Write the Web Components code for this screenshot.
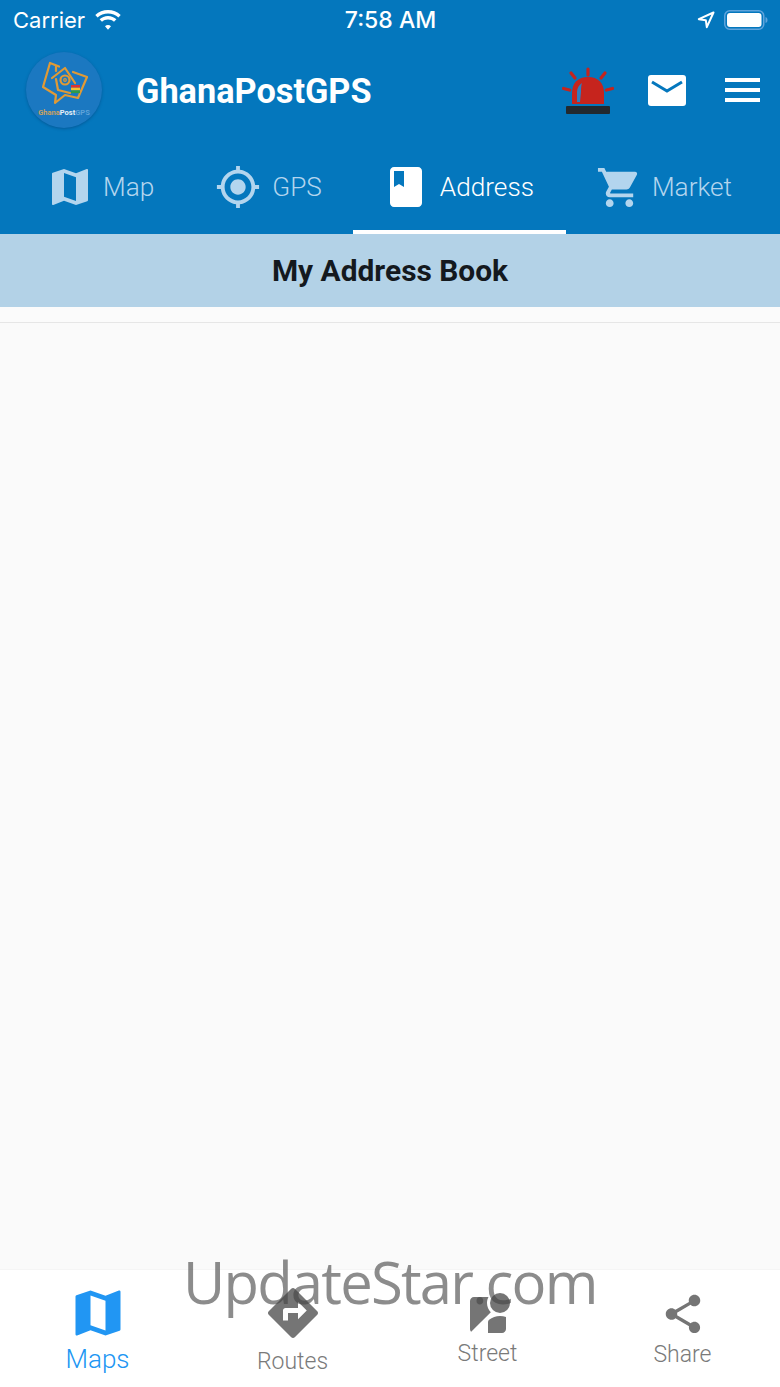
<!DOCTYPE html>
<html>
<head>
<meta charset="utf-8">
<style>
  html, body { margin: 0; padding: 0; }
  body { width: 780px; height: 1387px; overflow: hidden; background: #fafafa; font-family: Roboto, "Liberation Sans", sans-serif; position: relative; display: flex; flex-direction: column; }
  main-blank { flex: 1; }
</style>
</head>
<body>
<app-top>
  <status-bar></status-bar>
  <app-header></app-header>
  <tab-strip>
    <tab-item label="Map" icon="map" size="48" gap="12" pad-l="22" pad-r="28"></tab-item>
    <tab-item label="GPS" icon="gps" size="46" gap="14" pad-l="36" pad-r="31"></tab-item>
    <tab-item label="Address" icon="book" size="48" gap="13" pad-l="32" pad-r="32" active></tab-item>
    <tab-item label="Market" icon="cart" size="47" gap="12" pad-l="33" pad-r="30"></tab-item>
  </tab-strip>
</app-top>
<title-bar>My Address Book</title-bar>
<main-blank></main-blank>
<bottom-nav>
  <nav-item label="Maps" icon="map" size="60" top="13" fs="26" label-top="2" active></nav-item>
  <nav-item label="Routes" icon="directions" size="60" top="13" fs="23" label-top="5"></nav-item>
  <nav-item label="Street" icon="street" size="48" top="21" fs="23" label-top="1"></nav-item>
  <nav-item label="Share" icon="share" size="46" top="21" fs="23" label-top="4"></nav-item>
</bottom-nav>
<water-mark>UpdateStar.com</water-mark>

<script>
const ICONS = {
  map: '<path d="M20.5 3l-.16.03L15 5.1 9 3 3.36 4.9c-.21.07-.36.25-.36.48V20.5c0 .28.22.5.5.5l.16-.03L9 18.9l6 2.1 5.64-1.9c.21-.07.36-.25.36-.48V3.5c0-.28-.22-.5-.5-.5zM15 19l-6-2.11V5l6 2.11V19z"/>',
  gps: '<path d="M12 8c-2.21 0-4 1.79-4 4s1.79 4 4 4 4-1.79 4-4-1.79-4-4-4zm8.94 3c-.46-4.17-3.77-7.48-7.94-7.94V1h-2v2.06C6.83 3.52 3.52 6.83 3.06 11H1v2h2.06c.46 4.17 3.77 7.48 7.94 7.94V23h2v-2.06c4.17-.46 7.48-3.77 7.94-7.94H23v-2h-2.06zM12 19c-3.87 0-7-3.13-7-7s3.13-7 7-7 7 3.13 7 7-3.13 7-7 7z"/>',
  book: '<path d="M18 2H6c-1.1 0-2 .9-2 2v16c0 1.1.9 2 2 2h12c1.1 0 2-.9 2-2V4c0-1.1-.9-2-2-2zM6 4h5v8l-2.5-1.5L6 12V4z"/>',
  cart: '<path d="M7 18c-1.1 0-1.99.9-1.99 2S5.9 22 7 22s2-.9 2-2-.9-2-2-2zM1 2v2h2l3.6 7.59-1.35 2.45c-.16.28-.25.61-.25.96 0 1.1.9 2 2 2h12v-2H7.42c-.14 0-.25-.11-.25-.25l.03-.12.9-1.63h7.45c.75 0 1.41-.41 1.75-1.03l3.58-6.49c.08-.14.12-.31.12-.48 0-.55-.45-1-1-1H5.21l-.94-2H1zm16 16c-1.1 0-1.99.9-1.99 2s.89 2 1.99 2 2-.9 2-2-.9-2-2-2z"/>',
  directions: '<path d="M21.71 11.29l-9-9c-.39-.39-1.02-.39-1.41 0l-9 9c-.39.39-.39 1.02 0 1.41l9 9c.39.39 1.02.39 1.41 0l9-9c.39-.38.39-1.01 0-1.41zM14 14.5V12h-4v3H8v-4c0-.55.45-1 1-1h5V7.5l3.5 3.5-3.5 3.5z"/>',
  street: '<path d="M12.56 14.33c-.34.27-.56.7-.56 1.17V21h7c1.1 0 2-.9 2-2v-5.98c-.94-.33-1.95-.52-3-.52-2.03 0-3.93.7-5.44 1.83z"/><circle cx="18" cy="6" r="5"/><path d="M11.5 6c0-1.08.27-2.1.74-3H5c-1.1 0-2 .9-2 2v14c0 .55.23 1.05.59 1.41l9.82-9.82C12.23 9.42 11.5 7.8 11.5 6z"/>',
  share: '<path d="M18 16.08c-.76 0-1.44.3-1.96.77L8.91 12.7c.05-.23.09-.46.09-.7s-.04-.47-.09-.7l7.05-4.11c.54.5 1.25.81 2.04.81 1.66 0 3-1.34 3-3s-1.34-3-3-3-3 1.34-3 3c0 .24.04.47.09.7L8.04 9.81C7.5 9.31 6.79 9 6 9c-1.66 0-3 1.34-3 3s1.34 3 3 3c.79 0 1.5-.31 2.04-.81l7.12 4.16c-.05.21-.08.43-.08.65 0 1.61 1.31 2.92 2.92 2.92 1.61 0 2.92-1.31 2.92-2.92s-1.31-2.92-2.92-2.92z"/>'
};

class Base extends HTMLElement {
  constructor() {
    super();
    this.shadow = this.attachShadow({ mode: "open" });
  }
}

class AppTop extends Base {
  connectedCallback() {
    this.shadow.innerHTML = `<style>:host { display: block; background: #0477bd; flex: none; }</style><slot></slot>`;
  }
}

class StatusBar extends Base {
  connectedCallback() {
    this.shadow.innerHTML = `
      <style>
        :host { display: flex; align-items: center; height: 40px; padding: 0 12px 0 13px; color: #fff; font-family: Inter, "Liberation Sans", sans-serif; font-size: 22px; box-sizing: border-box; }
        .left, .right { flex: 1; display: flex; align-items: center; }
        .right { justify-content: flex-end; gap: 9px; }
        .left { gap: 9px; }
        .time { font-weight: 500; font-size: 23px; }
        svg { display: block; }
      </style>
      <div class="left">
        <span>Carrier</span>
        <svg width="28" height="20" viewBox="0 0 28 20"><path fill="#fff" d="M14 3.4c4 0 7.600 1.500 10.400 4l2.300-2.500C23.300 1.900 18.900 0 14 0S4.700 1.900 1.300 4.900l2.300 2.500c2.800-2.500 6.400-4 10.400-4zm0 6.100c2.300 0 4.400.9 6 2.300l2.400-2.500C20.200 7.300 17.200 6 14 6s-6.200 1.300-8.400 3.300L8 11.800c1.600-1.400 3.700-2.300 6-2.300zm0 5.600c-1.100 0-2.200.4-3 1.200l3 3.500 3-3.500c-.8-.8-1.900-1.200-3-1.200z"/></svg>
      </div>
      <span class="time">7:58 AM</span>
      <div class="right">
        <svg width="18" height="18" viewBox="0 0 18 18"><path fill="none" stroke="#fff" stroke-width="2" stroke-linejoin="round" d="M16.500 1.500L1.800 8.200l7 1 1 7z"/></svg>
        <svg width="44" height="20" viewBox="0 0 44 20"><rect x=".75" y=".75" width="39" height="18.500" rx="5" fill="none" stroke="#5fa4dc" stroke-width="1.500"/><rect x="3" y="3" width="34.500" height="14" rx="3" fill="#fff"/><path d="M41.500 7c1.500.5 2 1.500 2 3s-.5 2.500-2 3z" fill="#5fa4dc"/></svg>
      </div>`;
  }
}

class AppHeader extends Base {
  connectedCallback() {
    this.shadow.innerHTML = `
      <style>
        :host { display: flex; align-items: center; height: 100px; padding: 0 20px 0 26px; color: #fff; box-sizing: border-box; }
        .logo { width: 76px; height: 76px; border-radius: 50%; background: #1b78c1; box-shadow: 0 1px 3px rgba(0,40,90,.35); flex: none; display: flex; flex-direction: column; align-items: center; }
        .logo span { font: 700 7.500px/8px Roboto, sans-serif; color: #c9a163; margin-top: 1px; white-space: nowrap; }
        .logo b { color: #e8f0f6; font-weight: 700; }
        .logo i { color: #5fa3d8; font-style: normal; }
        h1 { margin: 0 0 0 34px; font: 700 34.300px Roboto, sans-serif; flex: 1; position: relative; top: 1px; }
        .acts { display: flex; align-items: center; }
        svg { display: block; }
        .siren { margin-right: 34px; }
        .mail { margin-right: 39px; }
      </style>
      <div class="logo">
        <svg width="76" height="56" viewBox="0 0 76 56" fill="none" stroke="#e09a36" stroke-width="2.200" stroke-linejoin="round" stroke-linecap="round">
          <path d="M33 14.500L24 11 17 35l13 8-1 8 10-8 13 3 9-21-14-5"/>
          <path d="M26 26l13-10 10 15"/>
          <path d="M30 19v-5"/>
          <path d="M30 27l2 11 12 3"/>
          <circle cx="39" cy="28" r="4.500"/>
          <circle cx="39" cy="28" r="1.300" stroke-width="1.200"/>
          <rect x="45" y="33" width="9" height="2.700" fill="#d33" stroke="none"/>
          <rect x="45" y="35.700" width="9" height="2.700" fill="#f2c230" stroke="none"/>
          <rect x="45" y="38.400" width="9" height="2.700" fill="#2d9a48" stroke="none"/>
        </svg>
        <span>Ghana<b>Post</b><i>GPS</i></span>
      </div>
      <h1>GhanaPostGPS</h1>
      <div class="acts">
        <svg class="siren" width="52" height="50" viewBox="0 0 52 50">
          <path d="M10 39V28c0-10 6-16 16-16s16 6 16 16v11z" fill="#c6241d"/>
          <path d="M15 37V27c0-4 2-7 5-9-1 3-1 6-1 9l-1 10z" fill="#2d7dbf"/>
          <rect x="4" y="41" width="44" height="8" rx="1" fill="#22292f"/>
          <g stroke="#c6241d" stroke-width="3.200" stroke-linecap="round">
            <path d="M26 4v6"/><path d="M9 8l4 5"/><path d="M43 8l-4 5"/><path d="M1.500 23.500l6 1.500"/><path d="M50.500 23.500l-6 1.500"/>
          </g>
        </svg>
        <svg class="mail" width="38" height="31" viewBox="0 0 38 31">
          <rect width="38" height="31" rx="3" fill="#fff"/>
          <path d="M4 7l15 9 15-9" fill="none" stroke="#0477bd" stroke-width="3"/>
        </svg>
        <svg width="35" height="24" viewBox="0 0 35 24" fill="#fff"><rect width="35" height="4"/><rect y="10" width="35" height="4"/><rect y="20" width="35" height="4"/></svg>
      </div>`;
  }
}

class TabStrip extends Base {
  connectedCallback() {
    this.shadow.innerHTML = `<style>:host { display: flex; height: 94px; padding-left: 27px; box-sizing: border-box; }</style><slot></slot>`;
  }
}

class TabItem extends Base {
  connectedCallback() {
    const a = (n) => this.getAttribute(n);
    const on = this.hasAttribute("active");
    this.shadow.innerHTML = `
      <style>
        :host { display: flex; align-items: center; gap: ${a("gap")}px; height: 94px; box-sizing: border-box; padding: 4px ${a("pad-r")}px 0 ${a("pad-l")}px; color: ${on ? "#fff" : "#b3d5ee"}; border-bottom: 4px solid ${on ? "#fff" : "transparent"}; }
        svg { display: block; fill: currentColor; margin: -3px; }
        span { font: 300 26.200px Roboto, sans-serif; }
      </style>
      <svg width="${a("size")}" height="${a("size")}" viewBox="0 0 24 24">${ICONS[a("icon")]}</svg>
      <span>${a("label")}</span>`;
  }
}

class TitleBar extends Base {
  connectedCallback() {
    this.shadow.innerHTML = `
      <style>
        :host { display: flex; align-items: center; justify-content: center; flex: none; height: 73px; background: #b3d2e7; color: #14191e; font: 700 29.900px Roboto, sans-serif; box-sizing: border-box; margin-bottom: 15px; box-shadow: 0 15px 0 #fbfbfb, 0 16px 0 #e6e6e6; }
      </style><slot></slot>`;
  }
}

class BottomNav extends Base {
  connectedCallback() {
    this.shadow.innerHTML = `<style>:host { display: grid; grid-template-columns: repeat(4, 195px); height: 117px; background: #fff; flex: none; box-shadow: 0 -1px 1px rgba(0,0,0,.02); }</style><slot></slot>`;
  }
}

class NavItem extends Base {
  connectedCallback() {
    const a = (n) => this.getAttribute(n);
    const on = this.hasAttribute("active");
    this.shadow.innerHTML = `
      <style>
        :host { display: flex; flex-direction: column; align-items: center; padding-top: ${a("top")}px; box-sizing: border-box; color: ${on ? "#2196f3" : "#757575"}; }
        svg { display: block; fill: currentColor; }
        span { font: 300 ${a("fs")}px Roboto, sans-serif; margin-top: ${a("label-top")}px; color: ${on ? "#2196f3" : "#7a7a7a"}; line-height: 28px; }
      </style>
      <svg width="${a("size")}" height="${a("size")}" viewBox="0 0 24 24">${ICONS[a("icon")]}</svg>
      <span>${a("label")}</span>`;
  }
}

class WaterMark extends Base {
  connectedCallback() {
    this.shadow.innerHTML = `
      <style>
        :host { position: absolute; left: 183px; top: 1242px; font: 400 58px/80px "Open Sans", sans-serif; color: rgba(70,70,70,.62); white-space: nowrap; letter-spacing: -1.800px; }
      </style><slot></slot>`;
  }
}

customElements.define("app-top", AppTop);
customElements.define("status-bar", StatusBar);
customElements.define("app-header", AppHeader);
customElements.define("tab-strip", TabStrip);
customElements.define("tab-item", TabItem);
customElements.define("title-bar", TitleBar);
customElements.define("bottom-nav", BottomNav);
customElements.define("nav-item", NavItem);
customElements.define("water-mark", WaterMark);
</script>
</body>
</html>
